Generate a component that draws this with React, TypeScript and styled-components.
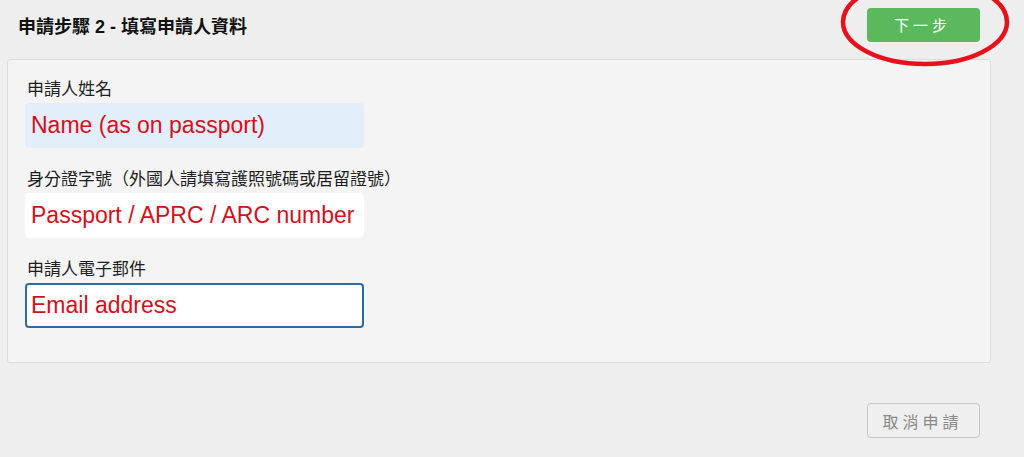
import styled, {createGlobalStyle} from "styled-components";

const GlobalStyle = createGlobalStyle`
    html, body {
        margin: 0;
        padding: 0;
        background: #eeeeee;
        font-family: "Liberation Sans", "Noto Sans CJK TC", sans-serif;
        color: #222;
    }
`

interface Field {
    label: string
    placeholder: string
    variant: 'autofill' | 'plain' | 'focus'
}

const fields: Field[] = [
    {label: '申請人姓名', placeholder: 'Name (as on passport)', variant: 'autofill'},
    {label: '身分證字號（外國人請填寫護照號碼或居留證號）', placeholder: 'Passport / APRC / ARC number', variant: 'plain'},
    {label: '申請人電子郵件', placeholder: 'Email address', variant: 'focus'},
]

function App() {
    return <Page>
        <GlobalStyle/>
        <Header>
            <Title>申請步驟 2 - 填寫申請人資料</Title>
            <NextWrap>
                <NextButton>下一步</NextButton>
                <Circle viewBox="0 0 172 90" aria-hidden>
                    <ellipse cx="86" cy="44" rx="82" ry="42" fill="none" stroke="#e8101a" strokeWidth="4.5"/>
                </Circle>
            </NextWrap>
        </Header>
        <Panel>
            {fields.map(f => <Group key={f.label}>
                <Label>{f.label}</Label>
                <Input $variant={f.variant}>{f.placeholder}</Input>
            </Group>)}
        </Panel>
        <Footer>
            <CancelButton>取消申請</CancelButton>
        </Footer>
    </Page>
}

const Page = styled.div`
    width: 1024px;
    height: 457px;
    overflow: hidden;
`

const Header = styled.div`
    display: flex;
    align-items: center;
    justify-content: space-between;
    height: 50px;
    padding: 0 44px 0 18px;
    margin-bottom: 9px;
`

const Title = styled.h1`
    margin: 0;
    font-size: 18px;
    font-weight: bold;
    color: #111;
`

const NextWrap = styled.div`
    position: relative;
`

const NextButton = styled.button`
    width: 113px;
    height: 34px;
    margin-top: -1px;
    border: none;
    border-radius: 4px;
    background: #5cb85c;
    color: #fff;
    font-family: "Noto Sans CJK TC", sans-serif;
    font-size: 15px;
    letter-spacing: 4px;
    padding-left: 4px;
`

const Circle = styled.svg`
    position: absolute;
    left: -28px;
    top: -31px;
    width: 172px;
    height: 90px;
    pointer-events: none;
    overflow: visible;
`

const Panel = styled.div`
    margin: 0 33px 0 7px;
    padding: 20px 17px 34px;
    background: #f4f4f4;
    border: 1px solid #dcdcdc;
    border-radius: 3px;
    display: flex;
    flex-direction: column;
    gap: 22px;
`

const Group = styled.div`
    display: flex;
    flex-direction: column;
    gap: 3px;
`

const Label = styled.label`
    font-size: 17px;
    line-height: 20px;
    padding-left: 2px;
    color: #1e1e1e;
`

const Input = styled.div<{ $variant: Field['variant'] }>`
    box-sizing: border-box;
    width: 339px;
    height: 45px;
    display: flex;
    align-items: center;
    padding-left: ${p => p.$variant === 'focus' ? 4 : 6}px;
    font-size: 23px;
    color: #d4101c;
    border-radius: 4px;
    background: ${p => p.$variant === 'autofill' ? '#e3eefb' : '#fff'};
    border: ${p => p.$variant === 'focus' ? '2px solid #2e6aa6' : 'none'};
`

const Footer = styled.div`
    display: flex;
    justify-content: flex-end;
    padding: 40px 44px 0 0;
`

const CancelButton = styled.button`
    width: 113px;
    height: 35px;
    border: 1px solid #c6c6c6;
    border-radius: 4px;
    background: #efefef;
    color: #8a8a8a;
    font-family: "Noto Sans CJK TC", sans-serif;
    font-size: 16px;
    letter-spacing: 4px;
    padding-left: 4px;
`

export default App;
